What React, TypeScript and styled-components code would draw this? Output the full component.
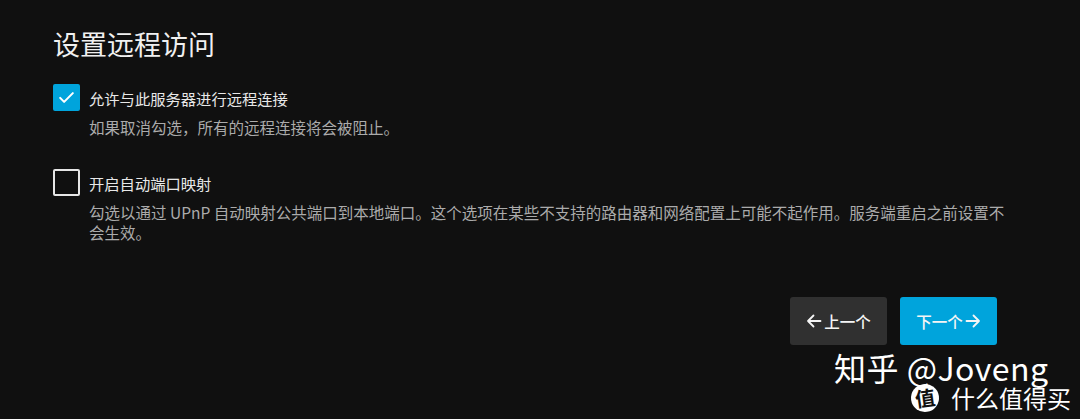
import React from "react";
import styled, { createGlobalStyle } from "styled-components";

const GlobalStyle = createGlobalStyle`
  html, body {
    margin: 0;
    padding: 0;
    background: #101010;
  }
  body {
    font-family: "Noto Sans CJK SC", "Noto Sans", sans-serif;
    color: #ededed;
  }
  * { box-sizing: border-box; }
`;

const Page = styled.div`
  position: relative;
  height: 419px;
  overflow: hidden;
  padding: 28px 53px 0 53px;
  background: #101010;
`;

const Form = styled.div`
  max-width: 954px;
  display: flex;
  flex-direction: column;
`;

const Title = styled.h2`
  margin: 0 0 25px 0;
  font-size: 27px;
  font-weight: 400;
  line-height: 31px;
  color: #f0f0f0;
`;

const Field = styled.div<{ $gap: number }>`
  display: grid;
  grid-template-columns: 27px 1fr;
  column-gap: 9px;
  margin-bottom: ${(p) => p.$gap}px;
`;

const Box = styled.span<{ $checked: boolean }>`
  width: 27px;
  height: 27px;
  border-radius: 2px;
  display: flex;
  align-items: center;
  justify-content: center;
  background: ${(p) => (p.$checked ? "#00a4dc" : "transparent")};
  border: ${(p) => (p.$checked ? "none" : "2px solid #e6e6e6")};
`;

const Label = styled.span`
  font-size: 15.3px;
  line-height: 27px;
  padding-top: 1px;
  color: #e8e8e8;
`;

const Desc = styled.div`
  grid-column: 2;
  margin-top: 5px;
  font-size: 15.5px;
  line-height: 20px;
  color: #ababab;
`;

const ButtonBar = styled.div`
  display: flex;
  justify-content: flex-end;
  gap: 13px;
  padding-right: 10px;
  margin-top: 55px;
`;

const Button = styled.button<{ $primary?: boolean }>`
  width: 97px;
  height: 48px;
  border: none;
  border-radius: 3px;
  display: flex;
  align-items: center;
  justify-content: center;
  gap: 2px;
  padding: 0;
  font-family: "Noto Sans CJK SC", sans-serif;
  font-size: 15.5px;
  font-weight: 500;
  color: #f5f5f5;
  background: ${(p) => (p.$primary ? "#00a4dc" : "#303030")};
`;

const Watermark = styled.div`
  position: absolute;
  left: 834px;
  top: 350px;
  color: #ffffff;
  font-family: "Noto Sans CJK SC", sans-serif;
  pointer-events: none;
`;

const MarkTop = styled.div`
  font-size: 32px;
  line-height: 34px;
  white-space: nowrap;
  letter-spacing: 0.5px;
`;

const MarkBottom = styled.div`
  display: flex;
  align-items: center;
  gap: 12px;
  margin-left: 77px;
`;

const ZhiBadge = styled.span`
  width: 28px;
  height: 28px;
  border-radius: 50%;
  background: #ffffff;
  color: #101010;
  display: flex;
  align-items: center;
  justify-content: center;
  font-size: 20px;
  font-weight: 700;
  line-height: 1;
  transform: rotate(-8deg);
`;

const MarkText = styled.span`
  font-size: 24px;
  line-height: 24px;
  white-space: nowrap;
`;

const Check = () => (
  <svg width="19" height="19" viewBox="0 0 24 24" fill="none">
    <path d="M4 12.5l5 5L20 6.5" stroke="#fff" strokeWidth="2.6" strokeLinecap="round" strokeLinejoin="round" />
  </svg>
);

const Arrow = ({ dir }: { dir: "left" | "right" }) => (
  <svg width="16" height="16" viewBox="0 0 16 16" fill="none" style={{ transform: dir === "right" ? "scaleX(-1)" : undefined }}>
    <path d="M14.5 8H2 M7.5 2.5L2 8l5.5 5.5" stroke="#f5f5f5" strokeWidth="1.8" strokeLinecap="round" strokeLinejoin="round" />
  </svg>
);

export default function App() {
  return (
    <>
      <GlobalStyle />
      <Page>
        <Form>
          <Title>设置远程访问</Title>
          <Field $gap={32}>
            <Box $checked>
              <Check />
            </Box>
            <Label>允许与此服务器进行远程连接</Label>
            <Desc>如果取消勾选，所有的远程连接将会被阻止。</Desc>
          </Field>
          <Field $gap={0}>
            <Box $checked={false} />
            <Label>开启自动端口映射</Label>
            <Desc>
              勾选以通过 UPnP 自动映射公共端口到本地端口。这个选项在某些不支持的路由器和网络配置上可能不起作用。服务端重启之前设置不会生效。
            </Desc>
          </Field>
          <ButtonBar>
            <Button>
              <Arrow dir="left" />
              上一个
            </Button>
            <Button $primary>
              下一个
              <Arrow dir="right" />
            </Button>
          </ButtonBar>
        </Form>
        <Watermark>
          <MarkTop>知乎 @Joveng</MarkTop>
          <MarkBottom>
            <ZhiBadge>值</ZhiBadge>
            <MarkText>什么值得买</MarkText>
          </MarkBottom>
        </Watermark>
      </Page>
    </>
  );
}
